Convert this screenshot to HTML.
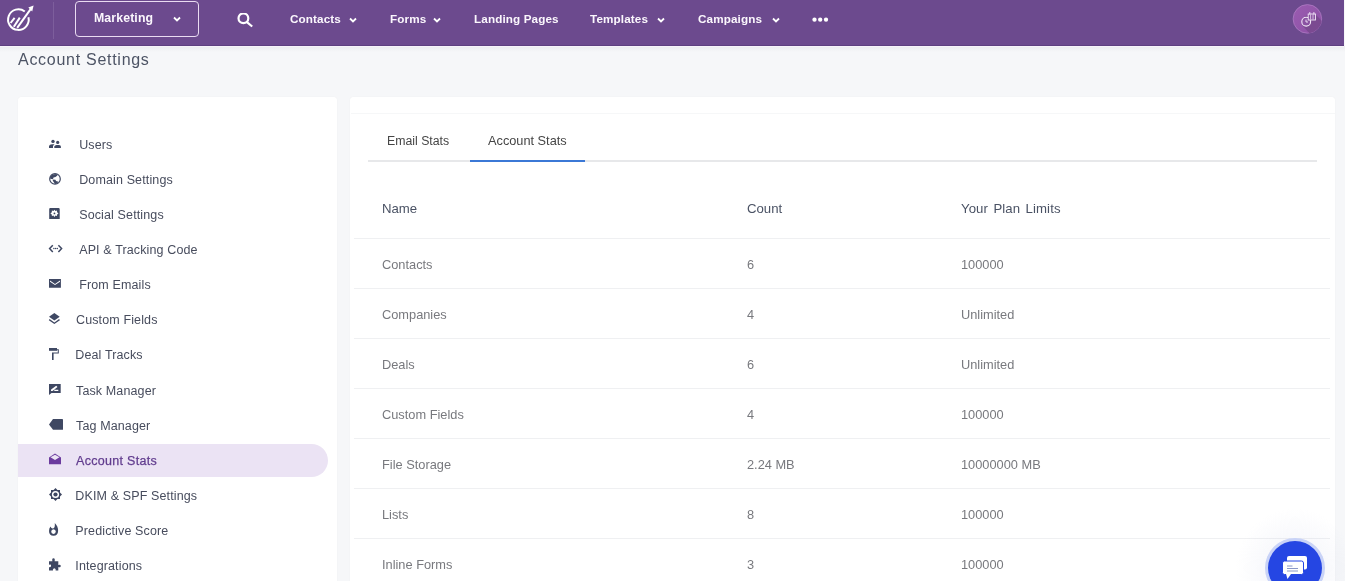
<!DOCTYPE html>
<html><head><meta charset="utf-8">
<style>
*{box-sizing:border-box;margin:0;padding:0}
html,body{width:1345px;height:581px;overflow:hidden;-webkit-font-smoothing:antialiased;background:#f6f7f9;font-family:"Liberation Sans",sans-serif;position:relative}
.abs{position:absolute;white-space:nowrap}
#nav{position:absolute;left:0;top:0;width:1344px;height:46px;background:#6c4a8e}
#navshadow{position:absolute;left:0;top:46px;width:1345px;height:6px;background:linear-gradient(#ebecef,#f6f7f9)}
.nt{position:absolute;color:#fbf7fd;font-size:11.7px;font-weight:700;letter-spacing:0.12px;top:12px;line-height:14px;white-space:nowrap}
.chev{position:absolute;width:8px;height:6px}
#card{position:absolute;left:18px;top:97px;width:319px;height:500px;background:#fff;border-radius:3px;box-shadow:0 0 1px rgba(0,0,0,0.08)}
#panel{position:absolute;left:350px;top:97px;width:985px;height:500px;background:#fff;border-radius:3px;box-shadow:0 0 1px rgba(0,0,0,0.08)}
.si{position:absolute;left:0;width:310px;height:35px}
.st{position:absolute;color:#474c5d;font-size:12.5px;letter-spacing:0.13px;line-height:15px;white-space:nowrap}
.ic{position:absolute;fill:#3f4a66}
.rt{position:absolute;color:#78797e;font-size:12.8px;line-height:15px;white-space:nowrap}
.ht{position:absolute;color:#4a5264;font-size:13.2px;line-height:15px;white-space:nowrap}
.rl{position:absolute;left:354px;width:976px;height:1px;background:#eff0f2}
</style></head><body><div style="position:absolute;left:0;top:0;width:1345px;height:581px;will-change:transform">
<div id="nav">
  <!-- logo -->
  <svg class="abs" style="left:0;top:0" width="46" height="46" viewBox="0 0 46 46">
    <path d="M28.44 17.3 A10.3 10.3 0 1 1 24.79 11.52" fill="none" stroke="#fff" stroke-width="2"/>
    <line x1="10.6" y1="23" x2="14.6" y2="17.8" stroke="#fff" stroke-width="2"/>
    <line x1="13.8" y1="26.8" x2="19.8" y2="17.6" stroke="#fff" stroke-width="2"/>
    <line x1="17.2" y1="27.8" x2="31" y2="8.6" stroke="#fff" stroke-width="2"/>
    <path d="M33.6 5.6 L28.3 7.6 L32.2 11.6 Z" fill="#fff"/>
  </svg>
  <div class="abs" style="left:53px;top:2px;width:1px;height:37px;background:#7d5e9c"></div>
  <div class="abs" style="left:75px;top:1px;width:124px;height:36px;border:1px solid #eadcf2;border-radius:4px"></div>
  <div class="nt" style="left:94px;top:11px;font-size:12.3px">Marketing</div>
  <svg class="chev" style="left:173px;top:16px" viewBox="0 0 8 6"><path d="M1 1.5 L4 4.5 L7 1.5" fill="none" stroke="#fff" stroke-width="1.8"/></svg>
  <!-- search -->
  <svg class="abs" style="left:237px;top:13px" width="17" height="16" viewBox="0 0 17 16"><circle cx="6.4" cy="5.3" r="4.9" fill="none" stroke="#fff" stroke-width="2.2"/><line x1="9.6" y1="8.8" x2="15.2" y2="13.5" stroke="#fff" stroke-width="2.2"/></svg>
  <div class="nt" style="left:290px">Contacts</div>
  <svg class="chev" style="left:349px;top:17px" viewBox="0 0 8 6"><path d="M1 1.5 L4 4.5 L7 1.5" fill="none" stroke="#fff" stroke-width="1.8"/></svg>
  <div class="nt" style="left:390px">Forms</div>
  <svg class="chev" style="left:433px;top:17px" viewBox="0 0 8 6"><path d="M1 1.5 L4 4.5 L7 1.5" fill="none" stroke="#fff" stroke-width="1.8"/></svg>
  <div class="nt" style="left:474px">Landing Pages</div>
  <div class="nt" style="left:590px">Templates</div>
  <svg class="chev" style="left:657px;top:17px" viewBox="0 0 8 6"><path d="M1 1.5 L4 4.5 L7 1.5" fill="none" stroke="#fff" stroke-width="1.8"/></svg>
  <div class="nt" style="left:698px">Campaigns</div>
  <svg class="chev" style="left:772px;top:17px" viewBox="0 0 8 6"><path d="M1 1.5 L4 4.5 L7 1.5" fill="none" stroke="#fff" stroke-width="1.8"/></svg>
  <svg class="abs" style="left:812px;top:16px" width="17" height="6" viewBox="0 0 17 6"><circle cx="2.5" cy="3.7" r="2.15" fill="#fff"/><circle cx="8.2" cy="3.7" r="2.15" fill="#fff"/><circle cx="14" cy="3.7" r="2.15" fill="#fff"/></svg>
  <!-- avatar -->
  <svg class="abs" style="left:1292px;top:4px" width="31" height="31" viewBox="0 0 31 31">
    <defs><clipPath id="cc"><circle cx="15.4" cy="14.9" r="14.3"/></clipPath>
    <linearGradient id="ag" x1="0" y1="0" x2="1" y2="1"><stop offset="0" stop-color="#9a5cb0"/><stop offset="1" stop-color="#8d50a6"/></linearGradient></defs>
    <circle cx="15.4" cy="14.9" r="14.3" fill="url(#ag)" stroke="#b888cc" stroke-width="0.6"/>
    <path d="M10 21 L13 12 L23 10 L31 18 L31 31 L19 31 Z" fill="#7b4a91" clip-path="url(#cc)"/>
    <circle cx="14.2" cy="17.7" r="4.4" fill="#8a52a2" stroke="#f3e8f8" stroke-width="1.1"/>
    <path d="M14 15.6 V18 H16" fill="none" stroke="#f3e8f8" stroke-width="0.9"/>
    <rect x="16.2" y="10" width="7.3" height="6" fill="#8a52a2" stroke="#f3e8f8" stroke-width="0.9"/>
    <line x1="18.6" y1="10.5" x2="18.6" y2="15.5" stroke="#f3e8f8" stroke-width="0.7"/>
    <line x1="21" y1="10.5" x2="21" y2="15.5" stroke="#f3e8f8" stroke-width="0.7"/>
    <line x1="17.8" y1="8" x2="17.8" y2="10.5" stroke="#f3e8f8" stroke-width="0.9"/>
    <line x1="21.9" y1="8" x2="21.9" y2="10.5" stroke="#f3e8f8" stroke-width="0.9"/>
  </svg>
</div>
<div id="navshadow"></div>
<div class="abs" style="left:0;top:45px;width:1344px;height:1px;background:#5e4080"></div>
<div class="abs" style="left:0;top:46px;width:1344px;height:1px;background:#f7f3fa"></div>
<div class="abs" style="left:18px;top:50px;font-size:16px;color:#4d5465;line-height:20px;letter-spacing:0.72px">Account Settings</div>

<div id="card"></div>
<div id="panel"></div>
<div class="abs" style="left:351px;top:113px;width:984px;height:1px;background:#f6f7f8"></div>

<!-- sidebar highlight -->
<div class="abs" style="left:18px;top:444px;width:310px;height:33px;background:#ebe3f4;border-radius:0 17px 17px 0"></div>

<!-- sidebar items -->
<div class="st" style="left:79.2px;top:138px">Users</div>
<div class="st" style="left:79.2px;top:173px">Domain Settings</div>
<div class="st" style="left:79.2px;top:208px">Social Settings</div>
<div class="st" style="left:79.2px;top:243px">API &amp; Tracking Code</div>
<div class="st" style="left:79.2px;top:278px">From Emails</div>
<div class="st" style="left:76px;top:313px">Custom Fields</div>
<div class="st" style="left:75.3px;top:348px">Deal Tracks</div>
<div class="st" style="left:76px;top:384px">Task Manager</div>
<div class="st" style="left:76px;top:419px">Tag Manager</div>
<div class="st" style="left:76px;top:454px;color:#613c8e;-webkit-text-stroke:0.25px #613c8e;letter-spacing:0.3px">Account Stats</div>
<div class="st" style="left:75.3px;top:489px">DKIM &amp; SPF Settings</div>
<div class="st" style="left:75.3px;top:524px">Predictive Score</div>
<div class="st" style="left:75.3px;top:559px">Integrations</div>

<!-- sidebar icons -->
<svg class="abs" style="left:0;top:0" width="70" height="581" viewBox="0 0 70 581">
 <g fill="#3f4863">
  <!-- users -->
  <circle cx="53" cy="141.4" r="1.7"/><circle cx="57.7" cy="142.4" r="1.6"/>
  <path d="M49 148 L49 146 Q49.5 144.3 52 144.2 L54.5 144.2 L53 146 L53 148 Z"/>
  <path d="M54.3 148 L54.3 146.5 Q54.8 145 56.5 145 L59 145 Q60.9 145.2 60.9 146.8 L60.9 148 Z"/>
  <!-- globe -->
  <path d="M55 173 A5.9 5.9 0 1 0 55 184.8 A5.9 5.9 0 1 0 55 173 Z M55 174.2 A4.7 4.7 0 1 1 55 183.6 A4.7 4.7 0 1 1 55 174.2 Z" fill-rule="evenodd"/>
  <path d="M52 174.5 L56.5 174 L57.5 175.5 L55.5 177 L53.5 177.5 L53 179 L50.5 179 L50 177 Z"/>
  <path d="M52.5 179.5 L55.5 179.8 L56 181 L58.5 181.8 L57 183.5 L55 184 L54 182.5 L53 181 Z"/>
  <!-- social settings -->
  <path d="M49.2 209.2 Q49.2 208.1 50.3 208.1 L58.6 208.1 Q59.7 208.1 59.7 209.2 L59.7 219 L49.2 219 Z M54.45 209.7 L55.4 211.1 L57 210.6 L57.1 212.3 L58.5 213.4 L57.1 214.4 L57 216.1 L55.4 215.6 L54.45 217 L53.5 215.6 L51.9 216.1 L51.8 214.4 L50.4 213.4 L51.8 212.3 L51.9 210.6 L53.5 211.1 Z" fill-rule="evenodd"/>
  <circle cx="54.45" cy="213.4" r="0.9"/>
  <!-- api -->
  <path d="M52.8 245.2 L49.6 248.6 L52.8 252" fill="none" stroke="#3f4863" stroke-width="1.5"/>
  <path d="M58.4 245.2 L61.6 248.6 L58.4 252" fill="none" stroke="#3f4863" stroke-width="1.5"/>
  <circle cx="53.9" cy="248.6" r="0.75"/><circle cx="55.6" cy="248.6" r="0.75"/><circle cx="57.3" cy="248.6" r="0.75"/>
  <!-- envelope -->
  <path d="M49 279 H60.9 V287.8 H49 Z M50 280.6 L55 283.9 L60 280.6 L60 281.8 L55 285 L50 281.8 Z" fill-rule="evenodd"/>
  <!-- custom fields (layers) -->
  <path d="M54.35 313 L59.7 316.8 L54.35 320.6 L49 316.8 Z"/>
  <path d="M49.2 319.6 L54.35 323.2 L59.5 319.6" fill="none" stroke="#3f4863" stroke-width="1.3"/>
  <!-- deal tracks (roller) -->
  <rect x="49" y="348" width="8" height="2.8"/>
  <path d="M57 349.2 H58.8 V353.6 H53.6 V359.9 H52 V352.4 H57.8 V350.3 H57 Z"/>
  <!-- task manager -->
  <path d="M49 384 H60.7 V393 H51.5 L49 395 Z M56.2 385.8 L57.5 386.9 L52.5 391 L51 391 L51.1 389.6 Z M54.3 389.8 H58.3 V390.9 H54.3 Z" fill-rule="evenodd"/>
  <!-- tag -->
  <path d="M53 419.1 H62.6 Q63 419.1 63 419.5 V429.4 Q63 429.8 62.6 429.8 H53 L49 424.5 Z"/>
  <!-- dkim -->
  <path d="M55.5 488.1 L57.4 490.1 L60 490.1 L60 492.6 L62 494.5 L60 496.4 L60 499 L57.4 499 L55.5 500.9 L53.6 499 L51 499 L51 496.4 L49 494.5 L51 492.6 L51 490.1 L53.6 490.1 Z M55.5 490.9 A3.6 3.6 0 1 0 55.5 498.1 A3.6 3.6 0 1 0 55.5 490.9 Z" fill-rule="evenodd"/>
  <circle cx="55.5" cy="494.5" r="2.1"/>
  <!-- predictive (flame) -->
  <path d="M54.8 523 Q56.3 524.5 57.3 526.5 Q58.2 528.8 58.1 531 Q58 535.7 53.5 535.7 Q49 535.7 49 531 Q49 528 50.5 526.5 Q51 528.2 52.3 528.5 Q54 528.5 54.6 527 Q55 525 54.8 523 Z M53.5 529.3 Q51.3 529.5 51.2 531.8 Q51.3 533.8 53.5 533.9 Q55.7 533.8 55.8 531.6 Q55.7 529.5 53.5 529.3 Z" fill-rule="evenodd"/>
  <!-- puzzle -->
  <path d="M49 561.2 H52.4 Q51.8 559.6 52.6 558.6 Q53.5 557.8 54.4 558.6 Q55.2 559.6 54.6 561.2 H58.3 V565 Q59.6 564.3 60.4 565.1 Q61.2 566 60.4 566.9 Q59.6 567.6 58.3 567 V570.5 H55.6 Q56 569.3 55.2 568.7 Q54.2 568 53.4 568.7 Q52.6 569.3 53 570.5 H49 V567 Q50.3 567.6 50.9 566.6 Q51.3 565.6 50.9 564.8 Q50.3 564.2 49 564.7 Z"/>
 </g>
 <!-- account stats envelope open -->
 <path d="M49 457.5 L55 453.5 L61 457.5 V464.2 H49 Z M50.5 457.3 L55 454.8 L59.5 457.3 L55 460 Z" fill="#6b3b9e" fill-rule="evenodd"/>
</svg>

<!-- tabs -->
<div class="abs" style="left:387px;top:134px;font-size:12.3px;color:#454545;line-height:15px">Email Stats</div>
<div class="abs" style="left:488px;top:133px;font-size:12.75px;color:#454545;line-height:15px">Account Stats</div>
<div class="abs" style="left:368px;top:160px;width:949px;height:2px;background:#e7e8ea"></div>
<div class="abs" style="left:470px;top:160px;width:115px;height:2px;background:#3b78d6"></div>

<!-- table header -->
<div class="ht" style="left:382px;top:201px">Name</div>
<div class="ht" style="left:747px;top:201px">Count</div>
<div class="ht" style="left:961px;top:201px;word-spacing:1.6px;letter-spacing:0.1px">Your Plan Limits</div>
<div class="rl" style="top:238px"></div>
<div class="rl" style="top:288px"></div>
<div class="rl" style="top:338px"></div>
<div class="rl" style="top:388px"></div>
<div class="rl" style="top:438px"></div>
<div class="rl" style="top:488px"></div>
<div class="rl" style="top:538px"></div>

<div class="rt" style="left:382px;top:257px">Contacts</div>
<div class="rt" style="left:747px;top:257px">6</div>
<div class="rt" style="left:961px;top:257px">100000</div>
<div class="rt" style="left:382px;top:307px">Companies</div>
<div class="rt" style="left:747px;top:307px">4</div>
<div class="rt" style="left:961px;top:307px">Unlimited</div>
<div class="rt" style="left:382px;top:357px">Deals</div>
<div class="rt" style="left:747px;top:357px">6</div>
<div class="rt" style="left:961px;top:357px">Unlimited</div>
<div class="rt" style="left:382px;top:407px">Custom Fields</div>
<div class="rt" style="left:747px;top:407px">4</div>
<div class="rt" style="left:961px;top:407px">100000</div>
<div class="rt" style="left:382px;top:457px">File Storage</div>
<div class="rt" style="left:747px;top:457px">2.24 MB</div>
<div class="rt" style="left:961px;top:457px">10000000 MB</div>
<div class="rt" style="left:382px;top:507px">Lists</div>
<div class="rt" style="left:747px;top:507px">8</div>
<div class="rt" style="left:961px;top:507px">100000</div>
<div class="rt" style="left:382px;top:557px">Inline Forms</div>
<div class="rt" style="left:747px;top:557px">3</div>
<div class="rt" style="left:961px;top:557px">100000</div>

<!-- chat button -->
<div class="abs" style="left:1235px;top:508px;width:120px;height:120px;border-radius:50%;background:radial-gradient(circle,rgba(200,205,230,0.25) 0,rgba(255,255,255,0) 70%)"></div>
<div class="abs" style="left:1265px;top:538px;width:60px;height:60px;border-radius:50%;background:#c9d3f7"></div>
<div class="abs" style="left:1268px;top:541px;width:54px;height:54px;border-radius:50%;background:#2546e3"></div>
<svg class="abs" style="left:1282px;top:555px" width="26" height="26" viewBox="0 0 26 26">
  <rect x="5" y="1" width="20" height="13.5" rx="2" fill="#fff"/>
  <rect x="0.5" y="6" width="21" height="13.5" rx="2" fill="#fff" stroke="#2546e3" stroke-width="1"/>
  <path d="M4 19 L5.5 24 L9 19 Z" fill="#fff"/>
  <line x1="5" y1="11" x2="10.5" y2="11" stroke="#8a98c8" stroke-width="1"/>
  <line x1="5" y1="13.5" x2="16" y2="13.5" stroke="#8a98c8" stroke-width="1"/>
  <line x1="5" y1="16" x2="16" y2="16" stroke="#8a98c8" stroke-width="1"/>
</svg>
</div></body></html>
